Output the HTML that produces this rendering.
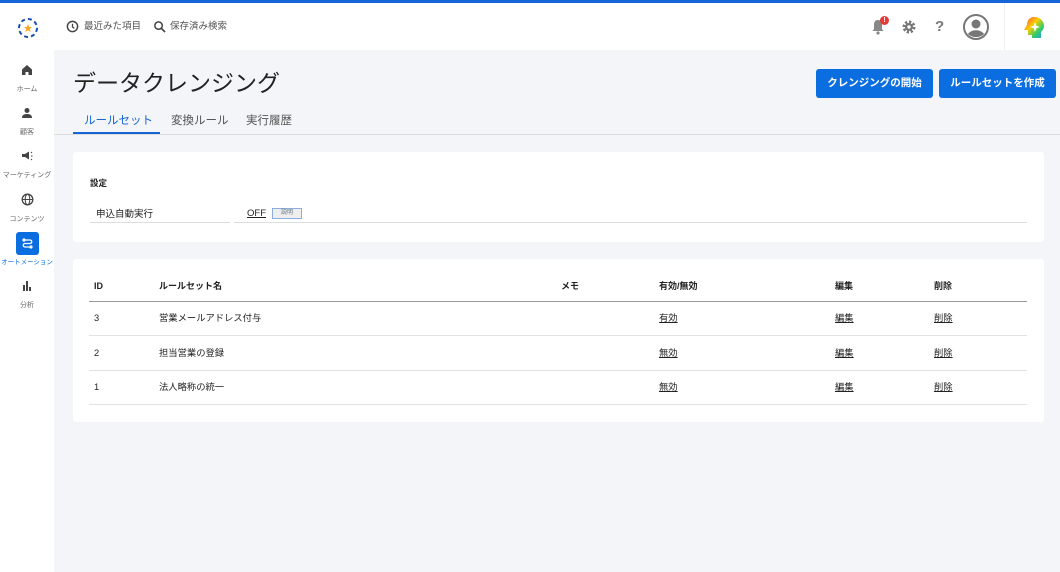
<!DOCTYPE html>
<html><head><meta charset="utf-8"><style>
*{box-sizing:border-box;margin:0;padding:0;line-height:1}
body{width:1060px;height:572px;overflow:hidden;background:#f4f5f8;font-family:"Liberation Sans","Noto Sans CJK JP",sans-serif;color:#222;position:relative}
.topbar{position:absolute;left:0;top:0;width:1060px;height:3px;background:#1565d8}
.header{position:absolute;left:0;top:3px;width:1060px;height:47px;background:#fff}
.side{position:absolute;left:0;top:50px;width:54px;height:522px;background:#fff}
.nav{position:absolute;left:0;width:54px;text-align:center;font-size:7px;color:#666;white-space:nowrap}
.nav div.l{margin-top:8px}
.abs{position:absolute}
.card{position:absolute;left:73px;background:#fff;border-radius:3px;width:971px}
.th{position:absolute;font-size:9px;font-weight:bold;top:23px}
.row{position:absolute;left:16px;width:938px;height:34px;border-bottom:1px solid #e2e2e2;font-size:9.3px}
.row span{position:absolute;top:12px}
.row u{text-decoration:underline}
.btn{position:absolute;top:69px;height:29px;background:#0a6ee0;color:#fff;font-size:10.5px;font-weight:bold;border-radius:3px;text-align:center;line-height:29px}
</style></head><body>
<div class="topbar"></div>
<div class="header">
<svg class="abs" style="left:16px;top:13px" width="24" height="24" viewBox="0 0 24 24"><g fill="none" stroke="#1a4fb0" stroke-width="2" stroke-dasharray="4 3"><circle cx="12" cy="12" r="9"/></g><polygon points="12,8 13.2,11 16,11 13.8,13 14.6,16 12,14.2 9.4,16 10.2,13 8,11 10.8,11" fill="#f5a623"/></svg>
<svg class="abs" style="left:66px;top:17px" width="13" height="13" viewBox="0 0 14 14"><circle cx="7" cy="7" r="5.5" fill="none" stroke="#444" stroke-width="1.6"/><path d="M7 4v3.5l2 1.5" stroke="#444" stroke-width="1.4" fill="none"/></svg>
<div class="abs" style="left:84px;top:19px;font-size:9.5px;color:#555">最近みた項目</div>
<svg class="abs" style="left:153px;top:17px" width="13" height="13" viewBox="0 0 14 14"><circle cx="6" cy="6" r="4" fill="none" stroke="#444" stroke-width="1.6"/><path d="M9 9l4 4" stroke="#444" stroke-width="1.8"/></svg>
<div class="abs" style="left:170px;top:19px;font-size:9.5px;color:#555">保存済み検索</div>
<svg class="abs" style="left:871px;top:15px" width="14" height="17" viewBox="0 0 14 17"><path d="M7 2c-3 0-4 2-4 5v4l-1.5 2h11L11 11V7c0-3-1-5-4-5z" fill="#888"/><circle cx="7" cy="15" r="1.6" fill="#888"/></svg>
<div class="abs" style="left:880px;top:13px;width:9px;height:9px;border-radius:50%;background:#e53935;color:#fff;font-size:7px;text-align:center;line-height:9px;font-weight:bold">!</div>
<svg class="abs" style="left:901px;top:16px" width="16" height="16" viewBox="0 0 16 16"><circle cx="8" cy="8" r="5" fill="none" stroke="#777" stroke-width="3" stroke-dasharray="2.2 1.7"/><circle cx="8" cy="8" r="4" fill="#777"/><circle cx="8" cy="8" r="1.7" fill="#fff"/></svg>
<div class="abs" style="left:935px;top:16px;font-size:15px;color:#777;font-weight:bold">?</div>
<svg class="abs" style="left:963px;top:11px" width="26" height="26" viewBox="0 0 26 26"><circle cx="13" cy="13" r="12" fill="#fff" stroke="#777" stroke-width="2"/><circle cx="13" cy="10" r="4.5" fill="#777"/><path d="M5 20c3-5 13-5 16 0c-4 4-12 4-16 0z" fill="#777"/></svg>
<div class="abs" style="left:1004px;top:0;width:1px;height:47px;background:#eee"></div>
<svg class="abs" style="left:1022px;top:13px" width="24" height="24" viewBox="0 0 24 24"><defs><linearGradient id="g" x1="0" y1="0" x2="1" y2="1"><stop offset="0" stop-color="#f44"/><stop offset=".4" stop-color="#fc0"/><stop offset=".7" stop-color="#3c6"/><stop offset="1" stop-color="#29f"/></linearGradient></defs><path d="M12 1c6 0 10 4 10 9c0 3-2 5-3 6v6h-9v-3H6v-5H2l3-5C5 4 8 1 12 1z" fill="url(#g)"/><path d="M13 6l1.3 3.7L18 11l-3.7 1.3L13 16l-1.3-3.7L8 11l3.7-1.3z" fill="#fff"/></svg>
</div>
<div class="side">
<div class="nav" style="top:14px"><svg width="12" height="12" viewBox="0 0 12 12"><path d="M6 1L1 5.5V11h3.5V8h3v3H11V5.5z" fill="#444"/></svg><div class="l">ホーム</div></div>
<div class="nav" style="top:57px"><svg width="12" height="12" viewBox="0 0 12 12"><circle cx="6" cy="3.5" r="2.5" fill="#444"/><path d="M1 11c0-3 2-4 5-4s5 1 5 4z" fill="#444"/></svg><div class="l">顧客</div></div>
<div class="nav" style="top:100px"><svg width="12" height="12" viewBox="0 0 12 12"><path d="M1 4h3l4-2.5v8L4 7H1z" fill="#444"/><path d="M10 3l1-1M10 9l1 1M10 6h1.5" stroke="#444"/></svg><div class="l">マーケティング</div></div>
<div class="nav" style="top:143px"><svg width="13" height="13" viewBox="0 0 13 13"><circle cx="6.5" cy="6.5" r="5.3" fill="none" stroke="#444" stroke-width="1.3"/><ellipse cx="6.5" cy="6.5" rx="2.3" ry="5.3" fill="none" stroke="#444"/><path d="M1.2 6.5h10.6" stroke="#444"/></svg><div class="l">コンテンツ</div></div>
<div class="nav" style="top:182px;color:#0a6ee0;font-size:6.5px"><div style="width:23px;height:23px;margin:0 auto;background:#0a6ee0;border-radius:3px;padding-top:5px"><svg width="13" height="13" viewBox="0 0 13 13"><circle cx="3" cy="3" r="1.6" fill="#fff"/><circle cx="10" cy="10" r="1.6" fill="#fff"/><path d="M4.5 3H9a1.7 1.7 0 010 3.5H4a1.7 1.7 0 000 3.5h4.5" stroke="#fff" stroke-width="1.3" fill="none"/></svg></div><div style="margin-top:5px">オートメーション</div></div>
<div class="nav" style="top:230px"><svg width="12" height="12" viewBox="0 0 12 12"><path d="M2 5h2v6H2zM5 1h2v10H5zM8 7h2v4H8z" fill="#444"/></svg><div class="l">分析</div></div>
</div>
<div class="abs" style="left:73px;top:72px;font-size:23px;color:#222">データクレンジング</div>
<div class="btn" style="left:816px;width:117px">クレンジングの開始</div>
<div class="btn" style="left:939px;width:117px">ルールセットを作成</div>
<div class="abs" style="left:84px;top:116px;font-size:11.5px;color:#1565d8">ルールセット</div>
<div class="abs" style="left:73px;top:132px;width:87px;height:3px;background:#1565d8"></div>
<div class="abs" style="left:171px;top:116px;font-size:11.5px;color:#555">変換ルール</div>
<div class="abs" style="left:246px;top:116px;font-size:11.5px;color:#555">実行履歴</div>
<div class="abs" style="left:54px;top:134px;width:1006px;height:1px;background:#dcdcdc"></div>
<div class="card" style="top:152px;height:90px">
<div class="abs" style="left:17px;top:27px;font-size:8.5px;font-weight:bold">設定</div>
<div class="abs" style="left:23px;top:58px;font-size:9.5px">申込自動実行</div>
<div class="abs" style="left:17px;top:70px;width:140px;height:1px;background:#ddd"></div>
<div class="abs" style="left:161px;top:70px;width:793px;height:1px;background:#ddd"></div>
<div class="abs" style="left:174px;top:57px;font-size:9.5px;text-decoration:underline">OFF</div>
<div class="abs" style="left:199px;top:56px;width:30px;height:11px;border:1px solid #8aaee0;background:#eee;font-size:6px;color:#678;text-align:center;line-height:9px">説明</div>
</div>
<div class="card" style="top:259px;height:163px">
<div class="th" style="left:21px">ID</div>
<div class="th" style="left:86px">ルールセット名</div>
<div class="th" style="left:488px">メモ</div>
<div class="th" style="left:586px">有効/無効</div>
<div class="th" style="left:762px">編集</div>
<div class="th" style="left:861px">削除</div>
<div class="abs" style="left:16px;top:42px;width:938px;height:1px;background:#999"></div>
<div class="row" style="top:43px"><span style="left:5px">3</span><span style="left:70px">営業メールアドレス付与</span><span style="left:570px"><u>有効</u></span><span style="left:746px"><u>編集</u></span><span style="left:845px"><u>削除</u></span></div>
<div class="row" style="top:78px"><span style="left:5px">2</span><span style="left:70px">担当営業の登録</span><span style="left:570px"><u>無効</u></span><span style="left:746px"><u>編集</u></span><span style="left:845px"><u>削除</u></span></div>
<div class="row" style="top:112px"><span style="left:5px">1</span><span style="left:70px">法人略称の統一</span><span style="left:570px"><u>無効</u></span><span style="left:746px"><u>編集</u></span><span style="left:845px"><u>削除</u></span></div>
</div>
</body></html>
